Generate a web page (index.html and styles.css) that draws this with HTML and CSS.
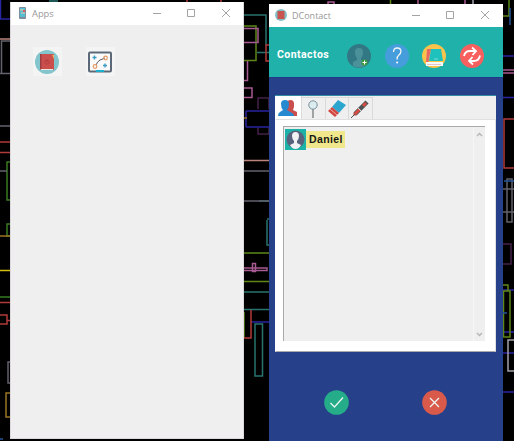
FILE: index.html
```
<!DOCTYPE html>
<html lang="es">
<head>
<meta charset="utf-8">
<title>DContact</title>
<link rel="stylesheet" href="styles.css">
</head>
<body>
<main class="desktop">
<svg class="wallpaper" width="514" height="441" fill="none" stroke-width="1.5">
  <g stroke="#2925a0"><path d="M-1 19H11M.5 0V19M246 111H270M246 127H270M246 111V127M251 322H270M503 56H514M503 97.500H514M503 290H514M503 332H514M503 353H514M503 392H514"/></g>
  <g stroke="#28736f"><path d="M244 15H266V45M257 52.500H273M267 220V245H270M244 292H270M244 309.500H270"/><rect x="255" y="324" width="7.500" height="52"/><path d="M49 1H58M259 201H270M267 219H270"/></g>
  <g stroke="#5e8718"><path d="M244 26H256V60.500H244M244 253H270M244 281.500H270M244 312V338"/><path d="M11 162H7V200H11M11 224H7V236H11M0 297H11" stroke="#377b21"/><path d="M503 285H508V291"/><rect x="503.500" y="291" width="6.500" height="46"/><path d="M503 16H509V0M390.500 0V4"/></g>
  <g stroke="#a65a91"><path d="M244 28.500H258V42.500H244M247.500 61V80.500H244M244 88H252V97.500H244M244 268H267V270.500H244"/><rect x="252.500" y="263.500" width="3" height="8"/><path d="M328 4V2H334V4M418 0V4M465 0V4M503 70H514M503 73H514"/></g>
  <g stroke="#63626c"><path d="M0 73.500H11M1.500 73V41H11M0 126H11M0 171H7M244 171H270M244 201H270M11 362H8V383H11M503 189H514M503 212H514"/><rect x="507" y="179" width="5" height="43"/><path d="M514 340H508V371H514M473 0V4" stroke="#a3a0ac"/></g>
  <g stroke="#b13b39"><path d="M0 142H11M0 152.500H11M0 302.500H11M0 315H7V324H0M7 320.500H11M187 0V2M221 0V2M270 45H266V61H270M251 310V338H244M514 119H504V168H514"/><path d="M0 39H11M244 160.500H270" stroke="#ba847b"/></g>
  <g stroke="#997522"><path d="M0 236H11M11 393H6V417H11M244 118H247"/><path d="M0 270.500H11" stroke="#d6be10"/></g>
  <path stroke="#44204a" d="M258 109V98H269V109M258 128V134H269V128M503 244H511V264H503"/>
  <path stroke="#245499" d="M504 181H514M503 313H507M0 439H3M510 8V25"/>
</svg>

<section class="window apps">
  <header class="titlebar">
    <svg width="7" height="12" viewBox="0 0 7 12"><rect width="7" height="12" rx="1" fill="#7d8d99"/><path fill="#54bfd2" d="M1 1h5v9H1z"/><path stroke="#edc8b1" d="M1 3h4M2 6h4"/><path fill="#d05e59" d="M4 3h2v2H4z"/></svg>
    <h1>Apps</h1>
    <svg class="controls" width="80" height="10" viewBox="0 0 80 10"><path d="M1 5.500h8M35.500 1.500h7v7h-7zM70 1l8 8M78 1l-8 8"/></svg>
  </header>
  <div class="launchers">
    <button><svg width="26" height="26" viewBox="0 0 26 26"><circle cx="13" cy="13" r="12" fill="#82c5cc"/><rect x="6" y="5" width="14" height="16" rx="1" fill="#ca4f4d"/><path fill="#9c3e41" d="M6 5h1.500v15H6z"/><path fill="#efe5df" d="M7 20h12v1H7z"/><path fill="#eeb15a" d="M18 6h2v4z"/><circle cx="13" cy="13" r="2.200" fill="none" stroke="#a93538" stroke-width=".6"/><path stroke="#a93538" stroke-width=".7" d="M13 11v2"/></svg></button>
    <button><svg width="26" height="26" viewBox="0 0 26 26"><rect x="2" y="3.500" width="22" height="19" rx="1" fill="#fafafa" stroke="#5c6877" stroke-width="2"/><path stroke="#1cb0d0" stroke-width="2" d="M9 22h8"/><path fill="none" stroke="#535b65" d="M9 16q1-3 4-5l5-2"/><g fill="none" stroke="#e49a65" stroke-width="1.200"><circle cx="18.500" cy="9" r="1.800"/><circle cx="8" cy="17.500" r="1.800"/></g><path stroke="#3b9bc4" stroke-width="1.300" d="M5.500 8.500h4M7.500 6.500v4M16 16.500h4M18 14.500v4"/></svg></button>
  </div>
</section>

<section class="window contact">
  <header class="titlebar">
    <svg width="12" height="12" viewBox="0 0 12 12"><circle cx="6" cy="6" r="6" fill="#82bfc6"/><path fill="#c9534f" d="M2.500 2h7v8h-7z"/></svg>
    <h1>DContact</h1>
    <svg class="controls" width="80" height="10" viewBox="0 0 80 10"><path d="M1 5.500h8M35.500 1.500h7v7h-7zM70 1l8 8M78 1l-8 8"/></svg>
  </header>
  <nav class="toolbar">
    <h2>Contactos</h2>
    <svg viewBox="0 0 24 24"><circle cx="12" cy="12" r="12" fill="#327884"/><path fill="#4a919a" d="M8 8q0-4 4-4t4 4q0 4-2 6v2l4 2v4q-6 3-12 0v-4l4-2v-2q-2-2-2-6"/><circle cx="17.500" cy="18.500" r="3" fill="#3a9938"/><path stroke="#fff" d="M15.500 18.500h4M17.500 16.500v4"/></svg>
    <svg viewBox="0 0 24 24"><circle cx="12" cy="12" r="12" fill="#469ddb"/><path fill="none" stroke="#f0f5f6" stroke-width="1.300" d="M8.500 8q0-4 3.700-4t3.700 3.500q0 2-2 3.500t-1.800 4.500"/><circle cx="12.100" cy="18.500" r="1" fill="#fff"/></svg>
    <svg viewBox="0 0 24 24"><circle cx="12" cy="12" r="12" fill="#fac34b"/><path fill="#e66766" d="M5 5h4l-3 15-2-1z"/><path fill="#1fc1bd" d="M9 5h10l2 12H7z"/><path fill="#f4fafa" d="M4 18h17v4H4z"/><path stroke="#cc7277" stroke-width=".4" d="M5 20.500h14"/><path stroke="#9ee8e4" stroke-width=".7" d="M12 15h4"/></svg>
    <svg viewBox="0 0 24 24"><circle cx="12" cy="12" r="12" fill="#f7605f"/><path fill="none" stroke="#fff" stroke-width="1.800" d="M4 12q1-5 6-5h6M12 3.500L16 7l-3.500 4M20 11.500q-1 5.500-6 5.500H9M12.500 13L9 17l4 3.500"/></svg>
  </nav>
  <div class="content">
    <div class="notebook">
      <div class="tabs">
        <span class="tab active"><svg width="20" height="18" viewBox="0 0 20 18"><path fill="#cb4e4e" d="M9 2q6-3 7 2v4l-1 3 4 2v4H9z"/><path fill="#278ad1" d="M3 5q0-4 4-4t4 4q0 4-2 6l5 3q2 1 2 3H0q0-3 2-4l3-2Q3 9 3 5"/></svg></span>
        <span class="tab"><svg width="18" height="20" viewBox="0 0 18 20"><path stroke="#8c9090" stroke-width="1.600" d="M9 10v9"/><circle cx="9" cy="6" r="4.200" fill="#ddecef" stroke="#748f99"/></svg></span>
        <span class="tab"><svg width="18" height="18" viewBox="0 0 18 18"><path fill="#2ca5cf" d="M10 0l8 5-7 8-7-6z"/><path fill="#d34640" d="M4 7l7 6-4 4-7-6z"/><path stroke="#f2d6ce" stroke-width=".7" d="M2 9l7 6"/></svg></span>
        <span class="tab"><svg width="18" height="18" viewBox="0 0 18 18"><path stroke="#495457" stroke-width="4.500" d="M4 14L16 2"/><path stroke="#d64d43" stroke-width="3" d="M3 15l6-6M12 6l3-3"/><path stroke="#4c5658" d="M0 18l4-4"/><path stroke="#c8e8e7" stroke-width="1" d="M7 8l3 3"/></svg></span>
      </div>
      <div class="page">
        <div class="list">
          <div class="items"><div class="item"><svg width="21" height="21" viewBox="0 0 21 21"><path fill="#1db2a8" d="M0 0h21v21H0z"/><circle cx="10.500" cy="10.500" r="9" fill="#59627c"/><path fill="#f2f2f4" d="M7 7q0-4 3.500-4T14 7q0 3-2 5v2l4 2q-2 4-5.500 4T5 16l4-2v-2Q7 10 7 7"/></svg><span>Daniel</span></div></div>
          <div class="scroll"><svg width="7" height="5" viewBox="0 0 7 5"><path d="M1 4l2.500-2.500L6 4"/></svg><svg width="7" height="5" viewBox="0 0 7 5"><path d="M1 1l2.500 2.500L6 1"/></svg></div>
        </div>
      </div>
    </div>
    <div class="actions">
      <svg viewBox="0 0 25 25"><circle cx="12.500" cy="12.500" r="12.300" fill="#24ad88" stroke="none"/><path d="M6.500 13l4 4 8.500-9.500"/></svg>
      <svg viewBox="0 0 25 25"><circle cx="12.500" cy="12.500" r="12.300" fill="#d9594b" stroke="none"/><path d="M8 8l9 9M17 8l-9 9"/></svg>
    </div>
  </div>
</section>
</main>
</body>
</html>
```
FILE: styles.css
```
* { box-sizing: border-box; }
body { margin: 0; font-family: "Open Sans", sans-serif; }
h1, h2 { margin: 0; }
svg { display: block; flex: none; }
.desktop { position: relative; width: 514px; height: 441px; overflow: hidden; background: #000; }
.wallpaper { position: absolute; inset: 0; }
.window { position: absolute; display: flex; flex-direction: column; }
.apps { left: 10px; top: 2px; width: 234px; height: 437px; background: #efefef; border: 1px solid #dcd8de; border-top: 0; }
.contact { left: 269px; top: 4px; width: 234px; height: 437px; background: #26418a; }
.titlebar { display: flex; align-items: center; height: 23px; background: #fff; padding: 0 11px 0 8px; flex: none; }
.titlebar h1 { font-size: 9.300px; font-weight: 400; color: #989898; margin: 0 0 0 6px; line-height: 12px; }
.titlebar svg { margin-top: -1px; }
.contact .titlebar { padding: 0 12px 0 6px; }
.contact .titlebar h1 { margin: 0 0 0 5px; font-size: 9px; }
.titlebar .controls { margin-left: auto; fill: none; stroke: #a3a3a3; }
.launchers { display: flex; gap: 24px; padding: 22px 0 0 22px; }
.launchers button { width: 29px; height: 29px; border: 0; padding: 1px; background: #f4f4f4; }
.toolbar { display: flex; align-items: center; height: 50px; padding: 8px 0 0 8px; background: #20b2aa; color: #fff; flex: none; }
.toolbar h2 { width: 70px; font: bold 10.5px Roboto, sans-serif; letter-spacing: .45px; margin-top: -4px; }
.toolbar svg { width: 24px; height: 24px; margin-right: 13.500px; }
.content { display: flex; flex-direction: column; padding: 17px 7px 0 6px; border-top: 1px solid #24388b; }
.notebook { height: 257px; background: #efefef; border-top: 1px solid #348aa0; display: flex; flex-direction: column; }
.tabs { display: flex; align-items: flex-end; height: 23px; }
.tab { width: 23.500px; height: 22px; border-right: 1px solid #dadada; border-top: 1px solid #dadada; display: flex; justify-content: center; align-items: center; }
.tab.active { width: 27px; height: 23px; background: #fff; border-top: 0; }
.page { flex: 1; background: #fff; border: 1px solid #e0e0e0; border-left-color: #fff; border-bottom: 1px solid #aaa; padding: 6px 10px 10px 7px; }
.list { display: flex; height: 100%; background: #efefef; border-top: 1px solid #a9a9a9; border-left: 1px solid #a9a9a9; }
.items { flex: 1; padding: 2px 0 0 1px; }
.item { display: flex; align-items: center; }
.item span { height: 17px; width: 39px; padding-left: 3px; background: #f0e68c; font: bold 10.5px/16px "Liberation Sans", sans-serif; letter-spacing: .4px; color: #151511; }
.scroll { width: 12px; display: flex; flex-direction: column; justify-content: space-between; align-items: center; padding: 5px 0 4px; border-left: 1px solid #f6f6f6; }
.scroll svg { fill: none; stroke: #b5b8b8; stroke-width: 1.500; }
.actions { display: flex; justify-content: space-between; padding: 38px 49px 0; }
.actions svg { width: 25px; height: 25px; fill: none; stroke: #eef6f2; stroke-width: 1.300; }
```
